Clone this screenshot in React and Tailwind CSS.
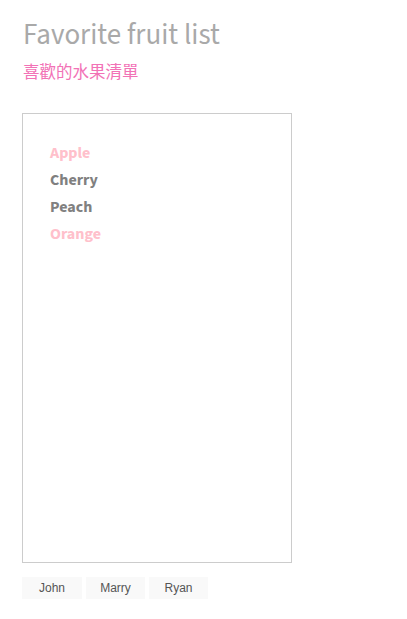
export default function App() {
  const fruits = [
    { name: "Apple", pink: true },
    { name: "Cherry", pink: false },
    { name: "Peach", pink: false },
    { name: "Orange", pink: true },
  ];
  return (
    <div className="bg-white min-h-[619px] px-[22px] pt-[17px] font-['Source_Sans_Pro','Source_Sans_3','Noto_Sans_CJK_TC',sans-serif]">
      <h1 className="text-[29px] leading-[36px] text-[#a9a9a9] pl-px">Favorite fruit list</h1>
      <h2 className="mt-[8px] text-[16.5px] leading-[24px] text-[#f272b6] pl-px">喜歡的水果清單</h2>
      <div className="mt-[28px] w-[270px] h-[450px] border border-[#cccccc] pl-[27px] pt-[26px]">
        <ul>
          {fruits.map((f) => (
            <li
              key={f.name}
              className={`text-[16px] leading-[27px] font-bold ${f.pink ? "text-[#ffc0cb]" : "text-[#808080]"}`}
            >
              {f.name}
            </li>
          ))}
        </ul>
      </div>
      <div className="mt-[14px] flex gap-1">
        {["John", "Marry", "Ryan"].map((n, i) => (
          <button
            key={n}
            className={`${i === 0 ? "w-[60px]" : "w-[59px]"} h-[22px] bg-[#f9f9f9] text-[12px] text-[#555555] font-['Liberation_Sans',sans-serif]`}
          >
            {n}
          </button>
        ))}
      </div>
    </div>
  );
}
